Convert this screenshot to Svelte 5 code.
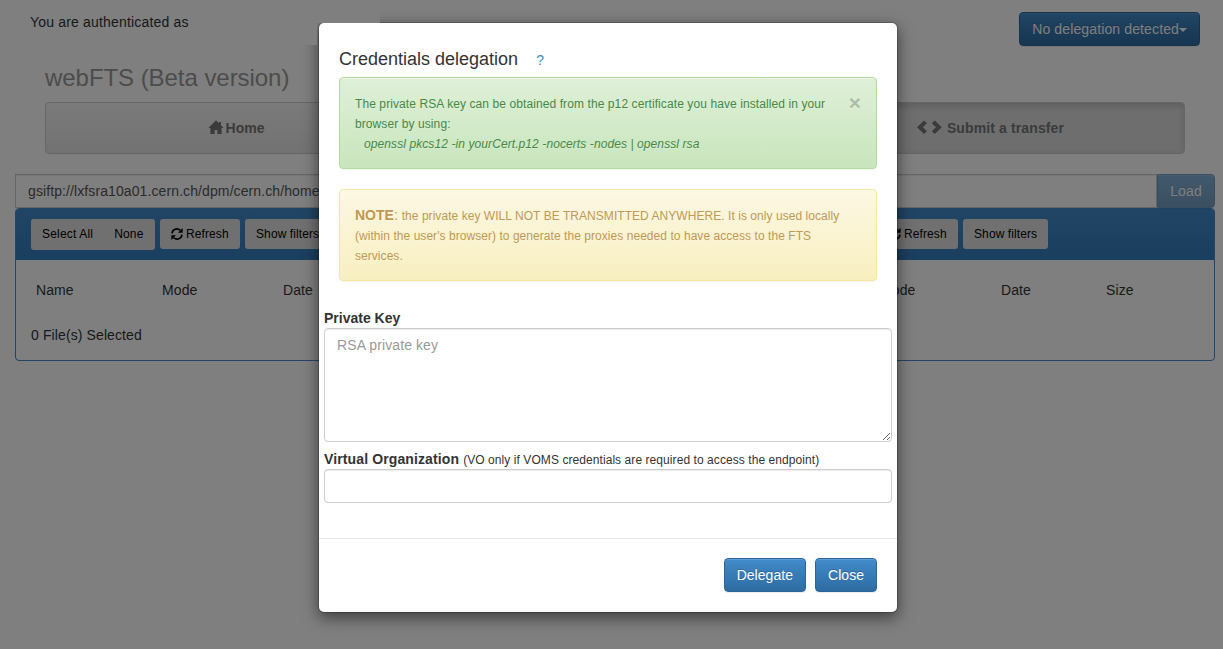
<script>
  const sides = [
    { path: 'gsiftp://lxfsra10a01.cern.ch/dpm/cern.ch/home', key: 'source' },
    { path: '', key: 'target' }
  ];
  let privateKey = $state('');
  let organization = $state('');
</script>

<div class="page">
  <header class="top">
    <span class="identity">You are authenticated as</span>
    <button class="btn primary">No delegation detected<i class="caret"></i></button>
  </header>

  <div class="brand">
    <h3>webFTS (Beta version)</h3>
    <nav>
      <a class="tab home" href="#home">
        <svg width="14" height="14" viewBox="0 0 14 14"><path d="M7-.8 10 2.2V1h2v3.2L14.6 7h-2v6H8.4V9H5.6v4H1.4V7H-.6z" /></svg>
        Home
      </a>
      <span></span>
      <a class="tab active" href="#transfer">
        <svg width="26" height="14" viewBox="0 0 26 14"><path d="M7-.6 10 2.2 5.8 6.2 10 10.2 7 13 0 6.2zM17.8-.6 14.8 2.2 19 6.2 14.8 10.2 17.8 13 24.8 6.2z" /></svg>
        Submit a transfer
      </a>
    </nav>
  </div>

  <main>
    {#each sides as side (side.key)}
      <section>
        <div class="address">
          <input class="path" type="text" value={side.path} aria-label="Endpoint" />
          <button class="btn primary load">Load</button>
        </div>
        <div class="panel">
          <div class="tools">
            <div class="group"><button class="small">Select All</button><button class="small">None</button></div>
            <button class="small refresh">
              <svg width="12" height="12" viewBox="0 0 14 14"><path d="M1.2 6.2A5.7 5.7 0 0 1 10.8 2.6M12.8 7.8A5.7 5.7 0 0 1 3.2 11.4" fill="none" stroke="currentColor" stroke-width="1.9" /><path d="M13.6 0v5.4H8.2zM.4 14v-5.4h5.4z" /></svg>
              Refresh
            </button>
            <button class="small">Show filters</button>
          </div>
          <div class="heads"><span>Name</span><span>Mode</span><span>Date</span><span>Size</span></div>
          <p>0 File(s) Selected</p>
        </div>
      </section>
    {/each}
  </main>
</div>

<div class="backdrop">
  <div class="dialog" role="dialog" aria-modal="true">
    <div class="body">
      <h4>Credentials delegation <a href="#help">?</a></h4>
      <div class="alert success">
        <button class="dismiss" aria-label="Dismiss">×</button>
        <small>The private RSA key can be obtained from the p12 certificate you have installed in your browser by using:</small><br />
        <small class="command">openssl pkcs12 -in yourCert.p12 -nocerts -nodes | openssl rsa</small>
      </div>
      <div class="alert warning">
        <strong>NOTE</strong>: <small>the private key WILL NOT BE TRANSMITTED ANYWHERE. It is only used locally (within the user's browser) to generate the proxies needed to have access to the FTS services.</small>
      </div>
    </div>
    <form>
      <label for="key">Private Key</label>
      <textarea id="key" placeholder="RSA private key" bind:value={privateKey}></textarea>
      <label class="vo" for="vo">Virtual Organization <small>(VO only if VOMS credentials are required to access the endpoint)</small></label>
      <input id="vo" type="text" bind:value={organization} />
    </form>
    <footer>
      <button class="btn primary">Delegate</button>
      <button class="btn primary">Close</button>
    </footer>
  </div>
  <div class="cover side"></div>
  <div class="cover above"></div>
</div>

<style>
  :global(body) {
    margin: 0;
    background: #fff;
    font: 14px/20px "Liberation Sans", Arial, sans-serif;
    color: #333;
    overflow: hidden;
  }
  * { box-sizing: border-box; }
  button, input, textarea { font-family: inherit; margin: 0; }
  svg { fill: currentColor; overflow: visible; }
  .page { height: 649px; padding: 12px 8px 0 15px; }
  .top {
    display: flex;
    justify-content: space-between;
    align-items: flex-start;
    padding: 0 15px;
    height: 51px;
  }
  .identity { letter-spacing: .18px; }
  .btn {
    height: 34px;
    padding: 0 12px;
    border: 1px solid #2b669a;
    border-radius: 4px;
    font-size: 14px;
    line-height: 20px;
    letter-spacing: .13px;
    color: #fff;
  }
  .primary {
    background: linear-gradient(#428bca, #2d6ca2);
    text-shadow: 0 -1px 0 rgba(0, 0, 0, .2);
    box-shadow: inset 0 1px 0 rgba(255, 255, 255, .15), 0 1px 1px rgba(0, 0, 0, .075);
  }
  .caret {
    display: inline-block;
    vertical-align: middle;
    border: 4px solid transparent;
    border-top-color: #fff;
    border-bottom: 0;
  }
  .brand { padding: 0 30px; }
  h3 { margin: 0; font-size: 24px; line-height: 30px; font-weight: 400; letter-spacing: -.05px; color: #999; }
  nav {
    display: grid;
    grid-template-columns: 380px 1fr 388px;
    height: 52px;
    margin: 9px 0 20px;
    border: 1px solid #ccc;
    border-radius: 4px;
    background: linear-gradient(#f5f5f5, #e5e5e5);
    overflow: hidden;
  }
  .tab {
    display: flex;
    align-items: center;
    justify-content: center;
    gap: 4px;
    font-weight: 700;
    color: #777;
    text-decoration: none;
  }
  .home { gap: 3px; padding-left: 1px; }
  .active { padding-left: 1px; background: #ddd; box-shadow: inset 0 3px 7px rgba(0, 0, 0, .15); letter-spacing: .12px; }
  main { display: flex; justify-content: space-between; }
  section { width: 482px; }
  .address { display: flex; height: 34px; }
  .path, #vo, textarea {
    border: 1px solid #ccc;
    padding: 6px 12px;
    font-size: 14px;
    line-height: 20px;
    letter-spacing: .1px;
    color: #555;
    background: #fff;
    box-shadow: inset 0 1px 1px rgba(0, 0, 0, .075);
  }
  .path { flex: 1; min-width: 0; }
  .load { width: 58px; border-radius: 0 4px 4px 0; opacity: .65; }
  .panel { height: 153px; border: 1px solid #428bca; border-radius: 4px; overflow: hidden; }
  .tools {
    display: flex;
    gap: 5px;
    height: 51px;
    padding: 10px 15px;
    background: linear-gradient(#428bca, #357ebd);
  }
  .small {
    height: 30px;
    border: 0;
    border-radius: 3px;
    padding: 0 11px;
    background: #e0e0e0;
    color: #000;
    font-size: 12px;
    line-height: 18px;
    letter-spacing: .1px;
    white-space: nowrap;
  }
  .group { display: flex; width: 124px; background: #e0e0e0; border-radius: 3px; }
  .group .small { padding-right: 10px; letter-spacing: .18px; }
  .refresh { display: flex; align-items: center; gap: 3px; width: 80px; }
  .heads {
    display: grid;
    grid-template-columns: 126px 121px 105px 1fr;
    padding: 20px 20px 0;
    letter-spacing: .1px;
  }
  p { margin: 25px 15px 0; letter-spacing: .11px; }
  .backdrop {
    position: absolute;
    inset: 0;
    display: flex;
    align-items: flex-start;
    padding: 22px 0 0 318px;
    background: rgba(0, 0, 0, .5);
  }
  .dialog {
    width: 580px;
    height: 591px;
    border: 1px solid rgba(0, 0, 0, .2);
    border-radius: 6px;
    background: #fff;
    background-clip: padding-box;
    box-shadow: 0 5px 15px rgba(0, 0, 0, .5);
  }
  .body { padding: 26px 20px 0; }
  h4 { height: 20px; margin: 0 0 8px; font-size: 18px; line-height: 20px; font-weight: 400; }
  h4 a { margin-left: 13px; font-size: 14px; line-height: 1; color: #428bca; text-decoration: none; }
  small { font-size: 12px; line-height: 1; letter-spacing: .09px; }
  .alert {
    height: 92px;
    margin-bottom: 20px;
    padding: 15px 35px 15px 15px;
    border: 1px solid;
    border-radius: 4px;
    text-shadow: 0 1px 0 rgba(255, 255, 255, .2);
    box-shadow: inset 0 1px 0 rgba(255, 255, 255, .25), 0 1px 2px rgba(0, 0, 0, .05);
  }
  .success { background: linear-gradient(#dff0d8, #c8e5bc); border-color: #b2dba1; color: #468847; }
  .warning { background: linear-gradient(#fcf8e3, #f8efc0); border-color: #f5e79e; color: #c09853; }
  .warning small { letter-spacing: .05px; }
  .command { margin-left: 9px; font-style: italic; }
  .dismiss {
    float: right;
    margin-right: -20px;
    padding: 0;
    border: 0;
    background: none;
    font-size: 21px;
    line-height: 20px;
    font-weight: 700;
    color: #000;
    opacity: .2;
    text-shadow: 0 1px 0 #fff;
  }
  form { display: flex; flex-direction: column; padding: 7px 5px 35px; }
  label { height: 20px; font-weight: 700; }
  .vo { letter-spacing: .12px; }
  label small { font-weight: 400; letter-spacing: .07px; }
  textarea { height: 114px; margin-bottom: 7px; border-radius: 4px; resize: both; }
  textarea::placeholder { color: #999; }
  #vo { height: 34px; border-radius: 4px; }
  footer {
    display: flex;
    justify-content: flex-end;
    gap: 9px;
    padding: 19px 20px 20px;
    border-top: 1px solid #e5e5e5;
  }
  footer .btn { letter-spacing: .04px; }
  .cover { position: absolute; background: #7f7f7f; }
  .side { left: 290px; top: 10px; width: 27px; height: 35px; }
  .above { left: 290px; top: 10px; width: 90px; height: 13px; }
</style>
